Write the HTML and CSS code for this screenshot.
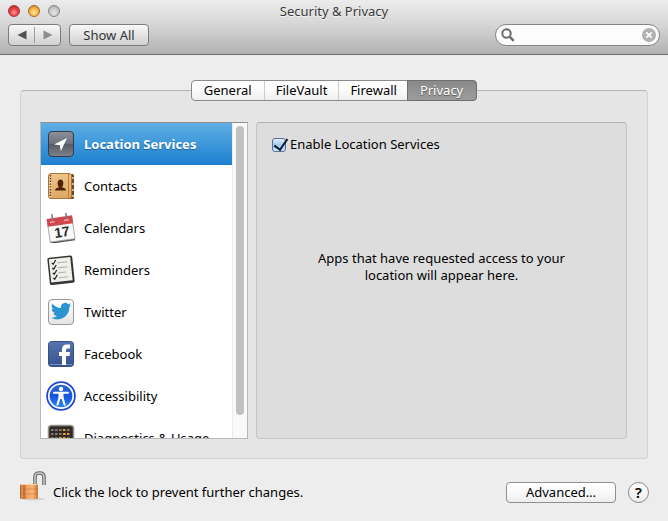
FILE: index.html
```html
<!DOCTYPE html>
<html lang="en">
<head>
<meta charset="utf-8">
<title>Security &amp; Privacy</title>
<link rel="stylesheet" href="styles.css">
</head>
<body>
<div class="window">
  <header class="titlebar">
    <div class="title-row">
      <div class="lights">
        <button class="light red" aria-label="Close"></button>
        <button class="light amber" aria-label="Minimize"></button>
        <button class="light gray" aria-label="Zoom" disabled></button>
      </div>
      <h1 class="title">Security &amp; Privacy</h1>
    </div>
    <div class="toolbar">
      <div class="nav-buttons">
        <button class="nav" aria-label="Back"><svg width="10" height="10" viewBox="0 0 10 10"><path d="M9.500 .5v9L.5 5z" fill="#505050"/></svg></button>
        <button class="nav" aria-label="Forward"><svg width="10" height="10" viewBox="0 0 10 10"><path d="M.5 .5v9L9.500 5z" fill="#8c8c8c"/></svg></button>
      </div>
      <button class="show-all">Show All</button>
      <div class="search">
        <svg width="14" height="14" viewBox="0 0 14 14" fill="none" stroke="#6b6b6b"><circle cx="5.500" cy="5.500" r="4.200" stroke-width="2"/><path d="M8.800 8.800l4 4" stroke-width="2.400"/></svg>
        <input type="text" aria-label="Search">
        <button class="clear" aria-label="Clear search"><svg width="14" height="14" viewBox="0 0 14 14"><circle cx="7" cy="7" r="7" fill="#b1b1b1"/><path d="M4.300 4.300l5.400 5.400M9.700 4.300l-5.400 5.400" stroke="#fff" stroke-width="1.700"/></svg></button>
      </div>
    </div>
  </header>

  <main class="content">
    <div class="tabs" role="tablist">
      <button class="tab" role="tab">General</button>
      <button class="tab" role="tab">FileVault</button>
      <button class="tab" role="tab">Firewall</button>
      <button class="tab selected" role="tab" aria-selected="true">Privacy</button>
    </div>
    <section class="group">
      <div class="list">
        <nav class="rows">
          <a class="row active" href="#">
            <svg class="icon" viewBox="0 0 30 30"><defs><linearGradient id="loc" x2="0" y2="1"><stop offset="0" stop-color="#8b929b"/><stop offset=".5" stop-color="#6b717a"/><stop offset=".5" stop-color="#555b64"/><stop offset="1" stop-color="#7c838d"/></linearGradient></defs><rect x="2.500" y="2.500" width="25" height="25" rx="3.500" fill="url(#loc)" stroke="#343b44"/><path d="M21 9L8 15.500l6 .8.800 6z" fill="#fff"/></svg>
            Location Services
          </a>
          <a class="row" href="#">
            <svg class="icon" viewBox="0 0 30 30"><defs><linearGradient id="con" x2="0" y2="1"><stop offset="0" stop-color="#efc588"/><stop offset="1" stop-color="#dfa763"/></linearGradient></defs><rect x="24" y="3" width="4" height="25" rx="1.500" fill="#704825"/><path d="M27 6v20" stroke="#d9b37a" stroke-width="2" stroke-dasharray="2 4"/><rect x="2.500" y="2.500" width="23" height="25" rx="2.500" fill="url(#con)" stroke="#a97437"/><path d="M4.500 4v22" stroke="#f3dcae" stroke-width="2"/><path d="M4.500 4v22" stroke="#4a2c12" stroke-width="1.400" stroke-dasharray="1.400 1.400"/><path d="M9 19.500c0-2 2-2.500 4-3.200-2-2.300-2-7.800 1.500-7.800s3.500 5.500 1.500 7.800c2 .7 4 1.200 4 3.200z" fill="#4c2508"/><path d="M22.500 3v24" stroke="#b87c3d"/></svg>
            Contacts
          </a>
          <a class="row" href="#">
            <svg class="icon" viewBox="0 0 30 30"><g transform="rotate(-8 15 16)"><path d="M2.500 27h25v2.200h-25z" fill="#555"/><rect x="2.500" y="5" width="25" height="22.500" fill="#fafafa" stroke="#999" stroke-width=".8"/><path d="M2.200 4h25.600v8H2.200z" fill="#d0484e"/><path d="M5 8h4.500M19 8h5" stroke="#f0a2a2" stroke-width="1.500"/><path d="M8 6.500V0M22 6.500V0" stroke="#7d8084" stroke-width="1.600"/><text x="15.500" y="24" text-anchor="middle" class="cal-day">17</text></g></svg>
            Calendars
          </a>
          <a class="row" href="#">
            <svg class="icon" viewBox="0 0 30 30"><g transform="rotate(-6 15 15)"><rect x="2.500" y="1.500" width="25" height="27.500" rx="2" fill="#343434"/><rect x="4" y="3" width="21.500" height="23.500" fill="#f0f0ea"/><path d="M12 7.500h10M12 12.500h10M12 17.500h8M12 22.500h9" stroke="#aaa" stroke-width=".9"/><path d="M6.500 7l1.300 1.500 3-4M6.500 12l1.300 1.500 3-4M6.500 17l1.300 1.500 3-4M6.500 22l1.300 1.500 3-4" fill="none" stroke="#222" stroke-width="1.200"/></g></svg>
            Reminders
          </a>
          <a class="row" href="#">
            <svg class="icon" viewBox="0 0 30 30"><defs><linearGradient id="tw" x2="0" y2="1"><stop offset="0" stop-color="#fff"/><stop offset="1" stop-color="#e4e4e4"/></linearGradient></defs><rect x="2.500" y="2.500" width="25" height="25" rx="3.500" fill="url(#tw)" stroke="#999"/><path transform="translate(5 4) scale(.85)" d="M23.950 4.570a10 10 0 0 1-2.820.77 4.960 4.960 0 0 0 2.160-2.720c-.95.550-2 .960-3.130 1.180a4.920 4.920 0 0 0-8.380 4.480C7.690 8.090 4.070 6.130 1.640 3.160a4.920 4.920 0 0 0 1.520 6.570 4.900 4.900 0 0 1-2.230-.610v.06a4.920 4.920 0 0 0 3.950 4.830 5 5 0 0 1-2.210.080 4.940 4.940 0 0 0 4.600 3.420A9.870 9.870 0 0 1 0 19.540 13.990 13.990 0 0 0 7.550 21.750c9.050 0 14-7.500 14-13.980v-.64a9.940 9.940 0 0 0 2.400-2.560z" fill="#2b93cf"/></svg>
            Twitter
          </a>
          <a class="row" href="#">
            <svg class="icon" viewBox="0 0 30 30"><defs><linearGradient id="fb" x2="0" y2="1"><stop offset="0" stop-color="#5874ae"/><stop offset="1" stop-color="#36538f"/></linearGradient></defs><rect x="2.500" y="2.500" width="25" height="25" rx="3" fill="url(#fb)" stroke="#354f88"/><path d="M4 25.500h22" stroke="#7690c0"/><path d="M16 26V17h-3v-4h3v-2c0-4 2-5.500 5-5.500h3v4h-2c-1.500 0-2 .5-2 2V13h4l-.5 4H20v9z" fill="#fff"/></svg>
            Facebook
          </a>
          <a class="row" href="#">
            <svg class="icon" viewBox="0 0 30 30"><defs><linearGradient id="acc" x2="0" y2="1"><stop offset="0" stop-color="#2d6bd8"/><stop offset=".5" stop-color="#1554dc"/><stop offset="1" stop-color="#2b86ff"/></linearGradient></defs><circle cx="15" cy="15" r="14.800" fill="#1f49c9"/><circle cx="15" cy="15" r="12.200" fill="url(#acc)" stroke="#fff" stroke-width="1.700"/><circle cx="15" cy="8" r="2.200" fill="#fff"/><path d="M8 11.800h14" stroke="#fff" stroke-width="2" stroke-linecap="round"/><path d="M13.500 17l-2 6.500M16.500 17l2 6.500" stroke="#fff" stroke-width="2.200" stroke-linecap="round"/><path d="M12.500 11.500h5v6.500h-5z" fill="#fff"/></svg>
            Accessibility
          </a>
          <a class="row" href="#">
            <svg class="icon" viewBox="0 0 30 30"><rect x="2.500" y="2.500" width="25" height="25" rx="3" fill="#2e2b29" stroke="#969087" stroke-width="1.500"/><path d="M5 7h20M5 11h20M5 15h20M5 19h20M5 23h20" stroke="#85776a" stroke-width="2.200" stroke-dasharray="2.600 1.400"/><path d="M17 11h6M13 15h6M17 7h2" stroke="#f09a24" stroke-width="2.200" stroke-dasharray="2.600 1.400"/></svg>
            Diagnostics &amp; Usage
          </a>
        </nav>
        <div class="track"><div class="thumb"></div></div>
      </div>
      <div class="pane">
        <label class="check"><input type="checkbox" checked>Enable Location Services</label>
        <p class="empty">Apps that have requested access to your location will appear here.</p>
      </div>
    </section>
  </main>

  <footer class="footer">
    <button class="lock" aria-label="Lock">
      <svg width="28" height="30" viewBox="0 0 28 30"><defs><linearGradient id="lk"><stop offset="0" stop-color="#a95320"/><stop offset=".12" stop-color="#e9a067"/><stop offset=".22" stop-color="#b9602a"/><stop offset=".35" stop-color="#efa05c"/><stop offset=".7" stop-color="#f6b777"/><stop offset="1" stop-color="#c87431"/></linearGradient></defs><ellipse cx="13" cy="28" rx="12" ry="1.500" fill="#d3d3d3"/><path d="M15 14V6q0-4 4.500-4T24 6v8" fill="none" stroke="#666" stroke-width="3.600"/><path d="M15 14V6q0-4 4.500-4T24 6v8" fill="none" stroke="#c8c8c8" stroke-width="1.600"/><rect x="0" y="13" width="18" height="15" rx="1.500" fill="url(#lk)"/><path d="M1 13.500h16" stroke="#f9cf9d"/><path d="M0 18h18M0 23h18" stroke="#b56228" opacity=".35"/></svg>
    </button>
    <span class="hint">Click the lock to prevent further changes.</span>
    <button class="advanced">Advanced…</button>
    <button class="help" aria-label="Help">?</button>
  </footer>
</div>
</body>
</html>
```
FILE: styles.css
```css
* { box-sizing: border-box; }

body {
  margin: 0;
  background: #ededed;
  color: #000;
  font: 13px/17px "Lucida Grande", "Noto Sans", sans-serif;
}

button {
  font: inherit;
  color: inherit;
  padding: 0;
  margin: 0;
}

.window {
  min-height: 100vh;
  display: flex;
  flex-direction: column;
}

/* Title bar */
.titlebar {
  height: 55px;
  padding: 0 8px;
  background: linear-gradient(#ececec, #d6d6d6 45%, #b2b2b2);
  border-bottom: 1px solid #6d6d6d;
}

.title-row {
  display: grid;
  grid-template-columns: 1fr auto 1fr;
  align-items: center;
  height: 22px;
  margin-bottom: 2px;
}

.title {
  margin: 0;
  font-size: 13px;
  font-weight: 400;
  color: #3a3a3a;
  text-shadow: 0 1px 0 #f5f5f5;
}

.lights { display: flex; gap: 8px; }

.light {
  width: 12px;
  height: 12px;
  border: 1px solid;
  border-radius: 50%;
}

.red { border-color: #9a3a3a; background: radial-gradient(circle at 50% 65%, #ff9a9a, #ee4048 45%, #c22f35 80%); }
.amber { border-color: #a4662c; background: radial-gradient(circle at 50% 65%, #ffe39a, #f8b545 50%, #d08428 85%); }
.gray { border-color: #858585; background: radial-gradient(circle at 50% 65%, #e6e6e6, #c9c9c9 50%, #a9a9a9 90%); }

.toolbar { display: flex; }

.nav-buttons, .show-all {
  height: 22px;
  border: 1px solid #7c7c7c;
  border-radius: 4px;
  background: linear-gradient(#f8f8f8, #d0d0d0);
}

.nav-buttons {
  display: flex;
  width: 53px;
  padding: 2px 0;
  margin-right: 8px;
}

.nav {
  flex: 1;
  display: flex;
  align-items: center;
  justify-content: center;
  border: 0;
  background: none;
}

.nav + .nav { border-left: 1px solid #9d9d9d; }

.show-all { width: 80px; color: #333; }

.search {
  display: flex;
  align-items: center;
  width: 165px;
  height: 22px;
  margin-left: auto;
  padding: 0 3px 0 5px;
  border: 1px solid #858585;
  border-radius: 11px;
  background: #fcfcfc;
}

.search input {
  flex: 1;
  min-width: 0;
  border: 0;
  outline: 0;
  background: none;
  font: inherit;
}

.clear { display: flex; border: 0; background: none; }

/* Tabs straddle the top edge of the group box */
.content {
  flex: 1;
  display: flex;
  flex-direction: column;
  padding: 25px 20px 0;
}

.tabs {
  display: flex;
  align-self: center;
  z-index: 1;
  height: 21px;
  margin-bottom: -11px;
  border: 1px solid #8a8a8a;
  border-radius: 4px;
  background: linear-gradient(#fff, #fbfbfb 50%, #eee);
}

.tab {
  padding: 0 11px;
  border: 0;
  border-left: 1px solid #ccc;
  background: none;
}

.tab:first-child { border-left: 0; padding: 0 12px; }

.tab.selected {
  margin: -1px;
  padding: 0 13px 0 12px;
  border: 1px solid #6f6f6f;
  border-radius: 0 4px 4px 0;
  background: linear-gradient(#8a8a8a, #9c9c9c);
  color: #fff;
  text-shadow: 0 1px 1px #555;
}

.group {
  flex: 1;
  display: grid;
  grid-template-columns: 208px 1fr;
  gap: 8px;
  padding: 31px 20px 19px 19px;
  border: 1px solid #d2d2d2;
  border-top-color: #b5b5b5;
  border-radius: 4px;
  background: #e5e5e5;
}

.list {
  display: flex;
  height: 317px;
  border: 1px solid #b8b8b8;
  border-top-color: #8f8f8f;
  background: #fff;
  overflow: hidden;
}

.rows { flex: 1; }

.row {
  display: flex;
  align-items: center;
  gap: 8px;
  height: 42px;
  padding-left: 5px;
  color: #000;
  text-decoration: none;
  white-space: nowrap;
}

.row.active {
  color: #fff;
  font-weight: 700;
  text-shadow: 0 1px 1px #1c5f9c;
  background: linear-gradient(#5fafe4, #1c80d0);
}

.icon { width: 30px; height: 30px; flex: none; }

.cal-day { font: 700 14px "Liberation Sans", sans-serif; fill: #2a2a2a; }

.track {
  width: 15px;
  padding: 3px 3px 0;
  background: #f9f9f9;
  border-left: 1px solid #ececec;
}

.thumb { height: 289px; border-radius: 4px; background: #c1c1c1; }

.pane {
  padding: 13px 14px;
  border: 1px solid #c6c6c6;
  border-top-color: #b2b2b2;
  border-radius: 4px;
  background: #dddddd;
}

.check { display: flex; align-items: center; gap: 4px; }

.check input {
  appearance: none;
  width: 14px;
  height: 14px;
  margin: 0 0 0 1px;
  border: 1px solid #5b6f95;
  border-radius: 3px;
  background: linear-gradient(#e4f0fc, #9cc8f2 50%, #c4ebff);
  position: relative;
}

.check input:checked::after {
  content: "";
  position: absolute;
  left: 4px;
  top: -3px;
  width: 6px;
  height: 12px;
  border: solid #101828;
  border-width: 0 2px 2px 0;
  transform: rotate(35deg);
}

.empty {
  width: 270px;
  margin: 97px auto 0;
  text-align: center;
}

/* Footer */
.footer {
  display: flex;
  align-items: center;
  height: 62px;
  padding: 4px 19px 0 20px;
}

.lock { display: flex; margin: 0 5px 12px 0; border: 0; background: none; }

.hint { flex: 1; }

.advanced {
  width: 110px;
  height: 21px;
  margin-right: 12px;
  border: 1px solid #8f8f8f;
  border-radius: 4px;
  background: linear-gradient(#fff, #f9f9f9 50%, #ededed);
}

.help {
  width: 21px;
  height: 21px;
  border: 1px solid #858585;
  border-radius: 50%;
  background: linear-gradient(#fff, #ececec);
  font-size: 15px;
  font-weight: 600;
}
```
